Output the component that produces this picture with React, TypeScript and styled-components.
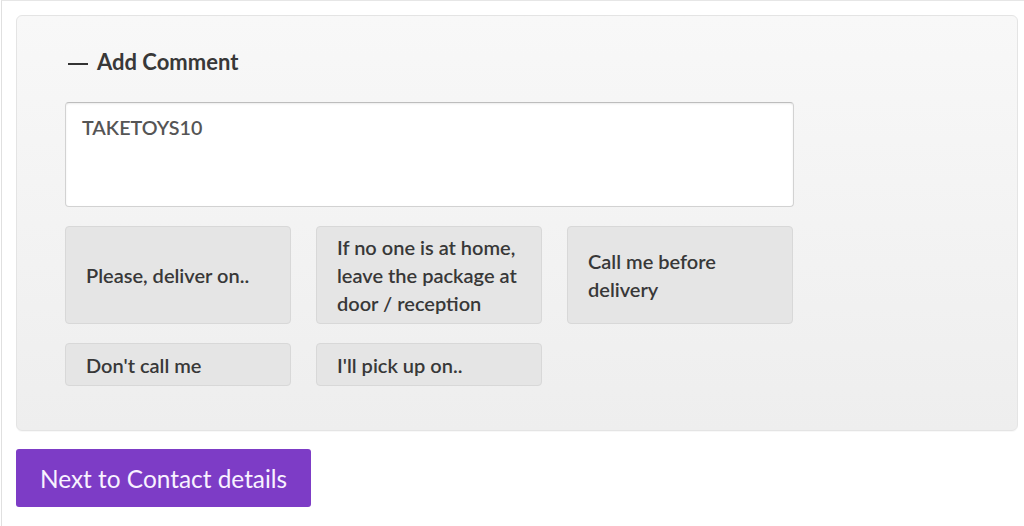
import React from "react";
import styled, { createGlobalStyle } from "styled-components";

const Global = createGlobalStyle`
  html, body { margin: 0; padding: 0; background: #fff; }
  body { font-family: Lato, "Open Sans", Arial, sans-serif; }
  * { box-sizing: border-box; }
`;

const Page = styled.div`
  width: 1024px;
  height: 526px;
  border-top: 1px solid #e6e6e6;
  border-left: 1px solid #e0e0e0;
  margin-left: 1px;
  padding: 14px 6px 0 14px;
  display: flex;
  flex-direction: column;
  align-items: flex-start;
  gap: 18px;
`;

const Panel = styled.section`
  width: 1002px;
  height: 416px;
  border: 1px solid #e4e4e4;
  border-radius: 6px;
  background: linear-gradient(#f8f8f8, #eeeeee);
  box-shadow: 0 1px 1px rgba(0, 0, 0, 0.03);
  padding: 32px 0 0 48px;
  display: flex;
  flex-direction: column;
`;

const Heading = styled.h3`
  margin: 0;
  font-family: Lato, Arial, sans-serif;
  font-weight: 700;
  font-size: 22px;
  line-height: 28px;
  color: #383838;
  display: flex;
  align-items: center;
  gap: 9px;
  padding-left: 3px;
`;

const Dash = styled.span`
  display: inline-block;
  width: 20px;
  height: 2px;
  background: #333;
  margin-top: 3px;
`;

const Comment = styled.textarea`
  margin-top: 26px;
  width: 729px;
  height: 105px;
  border: 1px solid #d2d2d2;
  border-top-color: #bdbdbd;
  border-radius: 4px;
  box-shadow: inset 0 1px 2px rgba(0, 0, 0, 0.08);
  background: #fff;
  padding: 13px 16px;
  font-family: Lato, Arial, sans-serif;
  font-size: 19.7px;
  font-weight: 600;
  line-height: 24px;
  color: #555;
  resize: none;
  outline: none;
`;

const Options = styled.div`
  margin-top: 19px;
  width: 728px;
  display: grid;
  grid-template-columns: repeat(3, 1fr);
  gap: 19px 25px;
`;

const Option = styled.button<{ $tall?: boolean }>`
  min-height: ${(p) => (p.$tall ? "98px" : "43px")};
  border: 1px solid #d8d8d8;
  border-radius: 4px;
  background: #e5e5e5;
  padding: 6px 20px;
  display: flex;
  align-items: center;
  text-align: left;
  font-family: Lato, Arial, sans-serif;
  font-weight: 600;
  font-size: 20px;
  line-height: 28px;
  color: #383838;
  cursor: pointer;
`;

const NextButton = styled.button`
  height: 58px;
  padding: 0 24px;
  border: none;
  border-radius: 3px;
  background: #7d3cc6;
  color: #f8f2ff;
  font-family: Lato, Arial, sans-serif;
  font-size: 24.4px;
  font-weight: 400;
  cursor: pointer;
`;

const options = [
  { text: "Please, deliver on..", tall: true },
  { text: "If no one is at home, leave the package at door / reception", tall: true },
  { text: "Call me before delivery", tall: true },
  { text: "Don't call me", tall: false },
  { text: "I'll pick up on..", tall: false },
];

export default function App() {
  return (
    <>
      <Global />
      <Page>
        <Panel>
          <Heading>
            <Dash />
            Add Comment
          </Heading>
          <Comment defaultValue="TAKETOYS10" />
          <Options>
            {options.map((o) => (
              <Option key={o.text} $tall={o.tall}>
                {o.text}
              </Option>
            ))}
          </Options>
        </Panel>
        <NextButton>Next to Contact details</NextButton>
      </Page>
    </>
  );
}
